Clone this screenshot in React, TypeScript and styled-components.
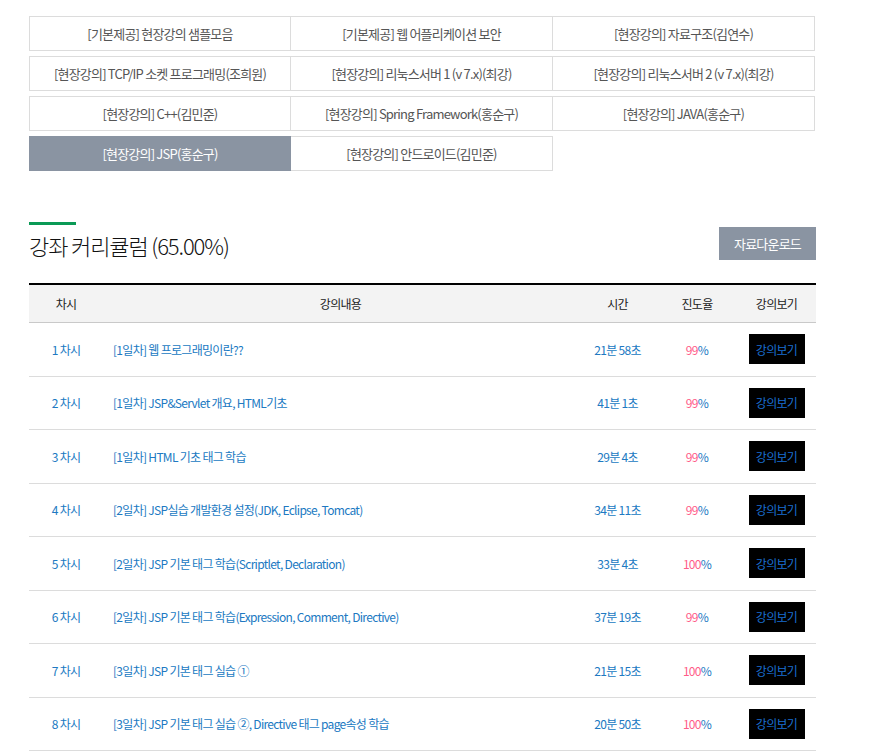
import styled, { createGlobalStyle } from "styled-components";

const GlobalStyle = createGlobalStyle`
  body {
    margin: 0;
    background: #fff;
    font-family: "Noto Sans CJK KR", "Noto Sans", sans-serif;
    color: #222;
  }
`;

const courses = [
  "[기본제공] 현장강의 샘플모음",
  "[기본제공] 웹 어플리케이션 보안",
  "[현장강의] 자료구조(김연수)",
  "[현장강의] TCP/IP 소켓 프로그래밍(조희원)",
  "[현장강의] 리눅스서버 1 (v 7.x)(최강)",
  "[현장강의] 리눅스서버 2 (v 7.x)(최강)",
  "[현장강의] C++(김민준)",
  "[현장강의] Spring Framework(홍순구)",
  "[현장강의] JAVA(홍순구)",
  "[현장강의] JSP(홍순구)",
  "[현장강의] 안드로이드(김민준)",
];

const ACTIVE = 9;

const lessons = [
  { no: 1, title: "[1일차] 웹 프로그래밍이란??", time: "21분 58초", rate: 99 },
  { no: 2, title: "[1일차] JSP&Servlet 개요, HTML기초", time: "41분 1초", rate: 99 },
  { no: 3, title: "[1일차] HTML 기초 태그 학습", time: "29분 4초", rate: 99 },
  { no: 4, title: "[2일차] JSP실습 개발환경 설정(JDK, Eclipse, Tomcat)", time: "34분 11초", rate: 99 },
  { no: 5, title: "[2일차] JSP 기본 태그 학습(Scriptlet, Declaration)", time: "33분 4초", rate: 100 },
  { no: 6, title: "[2일차] JSP 기본 태그 학습(Expression, Comment, Directive)", time: "37분 19초", rate: 99 },
  { no: 7, title: "[3일차] JSP 기본 태그 실습 ①", time: "21분 15초", rate: 100 },
  { no: 8, title: "[3일차] JSP 기본 태그 실습 ②, Directive 태그 page속성 학습", time: "20분 50초", rate: 100 },
];

export default function App() {
  return (
    <>
      <GlobalStyle />
      <Page>
        <CourseList>
          {courses.map((c, i) => (
            <CourseItem key={c} $active={i === ACTIVE}>
              {c}
            </CourseItem>
          ))}
        </CourseList>

        <SectionHead>
          <div>
            <GreenBar />
            <Title>강좌 커리큘럼 (65.00%)</Title>
          </div>
          <DownloadButton>자료다운로드</DownloadButton>
        </SectionHead>

        <Table>
          <HeadRow>
            <span>차시</span>
            <span>강의내용</span>
            <span>시간</span>
            <span>진도율</span>
            <span>강의보기</span>
          </HeadRow>
          {lessons.map((l) => (
            <Row key={l.no}>
              <Cell>{l.no} 차시</Cell>
              <Cell $left>{l.title}</Cell>
              <Cell>{l.time}</Cell>
              <Cell>
                <Rate>{l.rate}</Rate>%
              </Cell>
              <Cell>
                <WatchButton>강의보기</WatchButton>
              </Cell>
            </Row>
          ))}
        </Table>
      </Page>
    </>
  );
}

const Page = styled.div`
  width: 787px;
  padding: 16px 0 0 29px;
`;

const CourseList = styled.ul`
  list-style: none;
  margin: 0;
  padding: 0;
  display: grid;
  grid-template-columns: repeat(3, 262px);
  row-gap: 5px;
`;

const CourseItem = styled.li<{ $active?: boolean }>`
  box-sizing: border-box;
  height: 35px;
  display: flex;
  align-items: center;
  justify-content: center;
  border: 1px solid ${({ $active }) => ($active ? "#8a94a2" : "#dcdcdc")};
  background: ${({ $active }) => ($active ? "#8a94a2" : "#fff")};
  color: ${({ $active }) => ($active ? "#fff" : "#555")};
  font-size: 13px;
  letter-spacing: -0.8px;
  white-space: nowrap;

  &:nth-child(3n + 2),
  &:nth-child(3n) {
    border-left: none;
  }
`;

const SectionHead = styled.div`
  margin-top: 51px;
  display: flex;
  justify-content: space-between;
  align-items: flex-end;
`;

const GreenBar = styled.div`
  width: 47px;
  height: 3px;
  background: #0b9a56;
`;

const Title = styled.h2`
  margin: 5px 0 0;
  font-size: 22px;
  line-height: 30px;
  font-weight: 300;
  letter-spacing: -1.1px;
  color: #111;
`;

const DownloadButton = styled.button`
  width: 97px;
  height: 33px;
  border: none;
  background: #8a94a2;
  color: #fff;
  font-family: inherit;
  font-size: 13px;
  letter-spacing: -0.8px;
  padding: 0;
`;

const Table = styled.div`
  margin-top: 23px;
  border-top: 2px solid #000;
  font-size: 12px;
  letter-spacing: -0.7px;
`;

const columns = "74px 475px 79px 80px 79px";

const HeadRow = styled.div`
  display: grid;
  grid-template-columns: ${columns};
  box-sizing: border-box;
  height: 38px;
  align-items: center;
  text-align: center;
  background: #f3f3f3;
  border-bottom: 1px solid #c9c9c9;
  color: #222;
`;

const Row = styled.div`
  display: grid;
  grid-template-columns: ${columns};
  box-sizing: border-box;
  height: 53.5px;
  align-items: center;
  border-bottom: 1px solid #dcdcdc;
  color: #2079c2;
`;

const Cell = styled.div<{ $left?: boolean }>`
  padding-left: ${({ $left }) => ($left ? "10px" : "0")};
  white-space: nowrap;
  display: flex;
  justify-content: ${({ $left }) => ($left ? "flex-start" : "center")};
`;

const Rate = styled.span`
  color: #ff5c88;
`;

const WatchButton = styled.button`
  width: 56px;
  height: 30px;
  padding: 0;
  border: none;
  background: #000;
  color: #1a6fd0;
  font-family: inherit;
  font-size: 12px;
  letter-spacing: -0.7px;
`;
